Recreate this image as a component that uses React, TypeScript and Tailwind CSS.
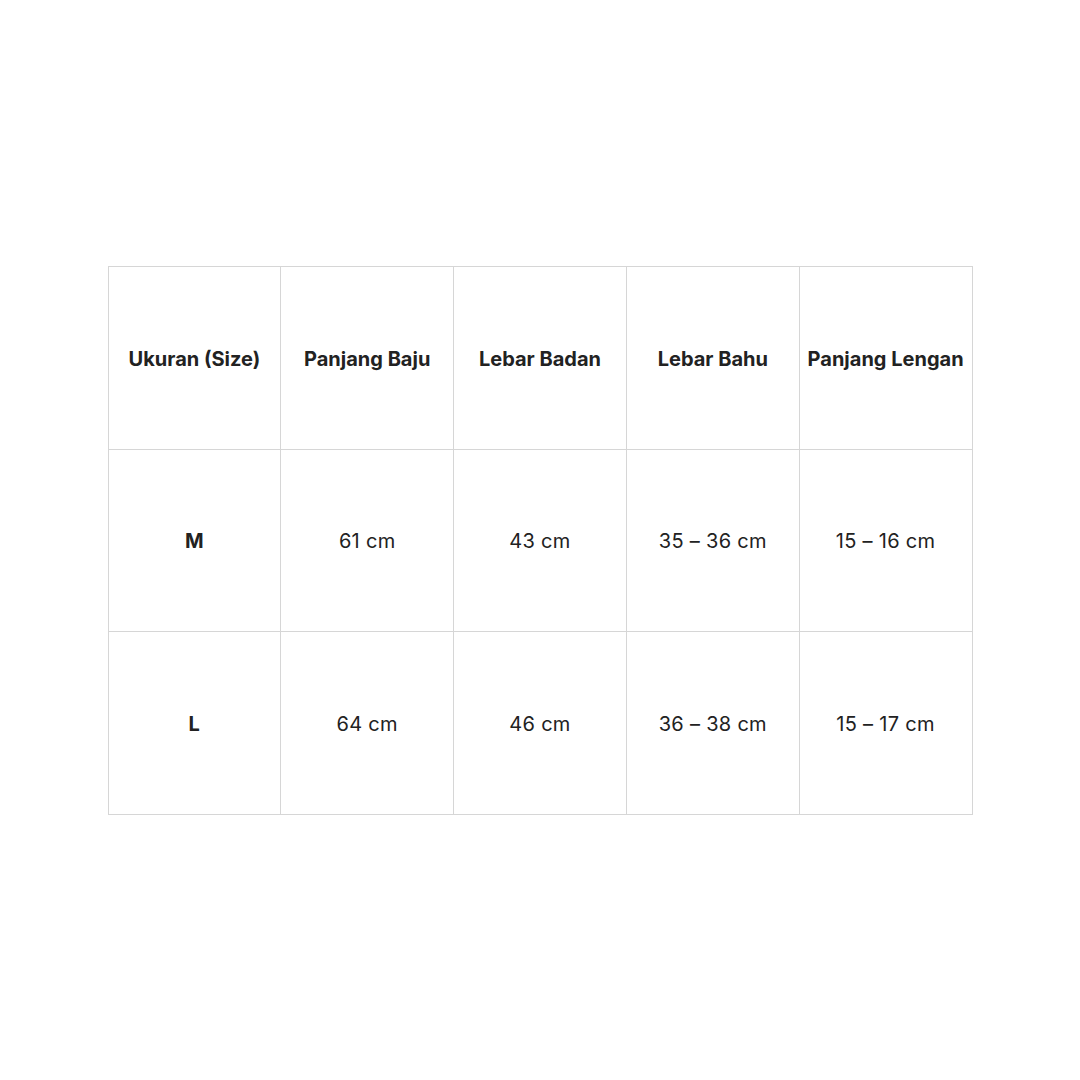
const headers = ["Ukuran (Size)", "Panjang Baju", "Lebar Badan", "Lebar Bahu", "Panjang Lengan"];

const rows = [
  ["M", "61 cm", "43 cm", "35 – 36 cm", "15 – 16 cm"],
  ["L", "64 cm", "46 cm", "36 – 38 cm", "15 – 17 cm"],
];

export default function App() {
  return (
    <div
      className="flex h-screen w-full items-center justify-center bg-white text-[#222]"
      style={{ fontFamily: "Inter, 'Noto Sans', sans-serif" }}
    >
      <div className="grid w-[865px] grid-cols-5 border-l border-t border-[#d6d6d6]">
        {headers.map((h) => (
          <div
            key={h}
            className="flex h-[183px] items-center justify-center border-b border-r border-[#d6d6d6] pt-[2px] text-center text-[20px] font-bold"
          >
            {h}
          </div>
        ))}
        {rows.map((row) =>
          row.map((cell, i) => (
            <div
              key={row[0] + i}
              className={
                "flex h-[182.5px] items-center justify-center border-b border-r border-[#d6d6d6] pt-[2px] text-center text-[20px] tracking-[0.3px] " +
                (i === 0 ? "font-bold" : "font-normal")
              }
            >
              {cell}
            </div>
          ))
        )}
      </div>
    </div>
  );
}
